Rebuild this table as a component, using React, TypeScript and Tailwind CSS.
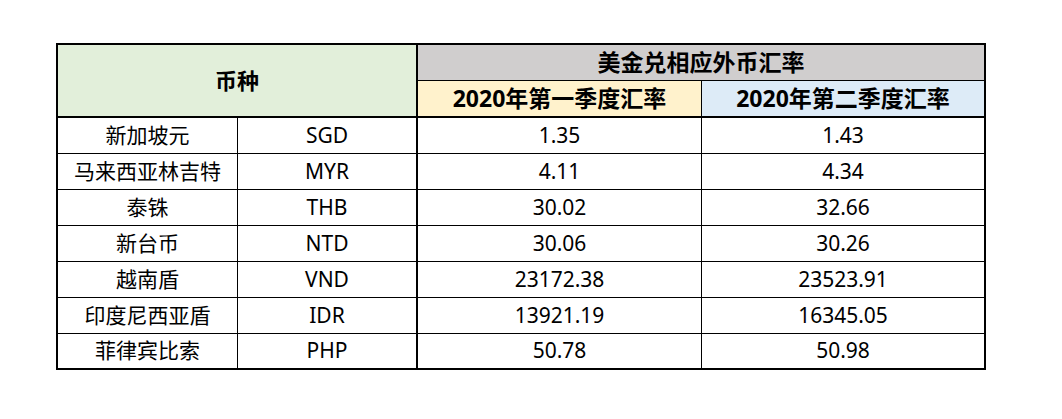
import React from "react";

interface RateRow {
  name: string;
  code: string;
  q1: string;
  q2: string;
}

const rows: RateRow[] = [
  { name: "新加坡元", code: "SGD", q1: "1.35", q2: "1.43" },
  { name: "马来西亚林吉特", code: "MYR", q1: "4.11", q2: "4.34" },
  { name: "泰铢", code: "THB", q1: "30.02", q2: "32.66" },
  { name: "新台币", code: "NTD", q1: "30.06", q2: "30.26" },
  { name: "越南盾", code: "VND", q1: "23172.38", q2: "23523.91" },
  { name: "印度尼西亚盾", code: "IDR", q1: "13921.19", q2: "16345.05" },
  { name: "菲律宾比索", code: "PHP", q1: "50.78", q2: "50.98" },
];

export default function App() {
  return (
    <div
      className="w-[1062px] h-[419px] bg-white pt-[43px] pl-[56px] text-black"
      style={{ fontFamily: '"Noto Sans", "Noto Sans CJK SC", sans-serif' }}
    >
      <div className="w-[930px] border-2 border-black">
        {/* Header */}
        <div className="flex h-[73px] border-b-2 border-black">
          <div className="w-[360px] border-r-2 border-black bg-[#e2efda] flex items-center justify-center text-[22px] font-bold">
            币种
          </div>
          <div className="flex-1 flex flex-col">
            <div className="h-[36px] bg-[#d0cece] border-b border-black flex items-center justify-center text-[23px] font-bold">
              美金兑相应外币汇率
            </div>
            <div className="flex-1 flex">
              <div className="w-[284px] border-r border-black bg-[#fff2cc] flex items-center justify-center text-[23px] font-bold">
                2020年第一季度汇率
              </div>
              <div className="flex-1 bg-[#ddebf7] flex items-center justify-center text-[23px] font-bold">
                2020年第二季度汇率
              </div>
            </div>
          </div>
        </div>

        {/* Body */}
        {rows.map((r, i) => (
          <div
            key={r.code}
            className={
              i < rows.length - 1
                ? "flex h-[36px] border-b border-black text-[21px]"
                : "flex h-[34px] text-[21px]"
            }
          >
            <div className="w-[180px] border-r border-black flex items-center justify-center">
              {r.name}
            </div>
            <div className="w-[180px] border-r-2 border-black flex items-center justify-center">
              {r.code}
            </div>
            <div className="w-[284px] border-r border-black flex items-center justify-center">
              {r.q1}
            </div>
            <div className="flex-1 flex items-center justify-center">{r.q2}</div>
          </div>
        ))}
      </div>
    </div>
  );
}
